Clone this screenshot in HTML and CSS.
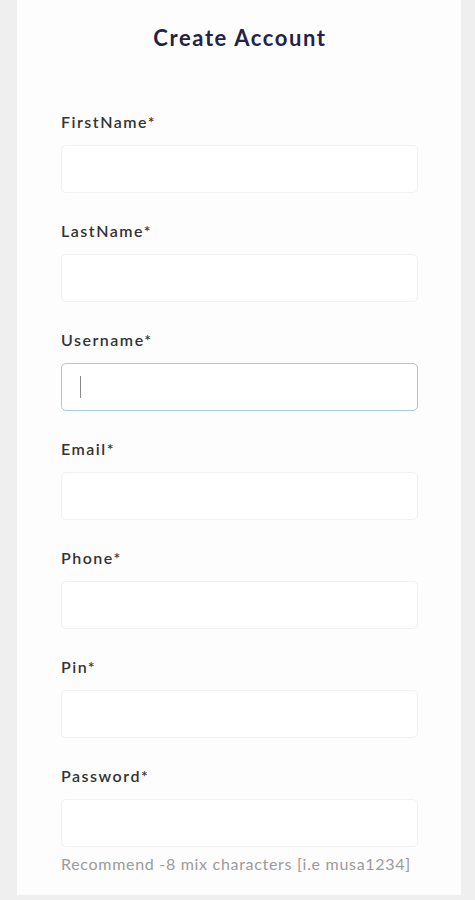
FILE: index.html
```html
<!DOCTYPE html>
<html>
<head>
<meta charset="utf-8">
<link rel="stylesheet" href="styles.css">
</head>
<body>
<div class="panel">
  <h1 class="title">Create Account</h1>
  <form class="form">
    <div class="field">
      <label class="label">FirstName*</label>
      <div class="input"></div>
    </div>
    <div class="field">
      <label class="label">LastName*</label>
      <div class="input"></div>
    </div>
    <div class="field">
      <label class="label">Username*</label>
      <div class="input focused"><span class="caret"></span></div>
    </div>
    <div class="field">
      <label class="label">Email*</label>
      <div class="input"></div>
    </div>
    <div class="field">
      <label class="label">Phone*</label>
      <div class="input"></div>
    </div>
    <div class="field">
      <label class="label">Pin*</label>
      <div class="input"></div>
    </div>
    <div class="field">
      <label class="label">Password*</label>
      <div class="input"></div>
      <p class="hint">Recommend -8 mix characters [i.e musa1234]</p>
    </div>
  </form>
</div>
</body>
</html>
```

FILE: styles.css
```css
html, body {
  margin: 0;
  padding: 0;
  background: #efefef;
  font-family: Lato, "Open Sans", sans-serif;
}
.panel {
  margin: 0 14px 0 17px;
  width: 444px;
  height: 895px;
  background: #fdfdfd;
  box-sizing: border-box;
  padding: 22px 42px 0 44px;
}
.title {
  margin: 0;
  text-align: center;
  font-size: 22px;
  font-weight: 700;
  letter-spacing: 1.6px;
  color: #23234a;
  line-height: 32px;
}
.form {
  margin-top: 58px;
  display: flex;
  flex-direction: column;
  gap: 28px;
}
.field {
  display: flex;
  flex-direction: column;
}
.label {
  font-size: 16px;
  letter-spacing: 1.5px;
  color: #333;
  font-weight: 600;
  line-height: 20px;
  margin-bottom: 13px;
}
.input {
  height: 48px;
  width: 357px;
  box-sizing: border-box;
  border: 1px solid #f1f1f1;
  border-radius: 5px;
  background: #fff;
  display: flex;
  align-items: center;
  padding-left: 18px;
}
.input.focused {
  border-color: #a9c7dd;
}
.caret {
  width: 1px;
  height: 22px;
  background: #8a8a8a;
}
.hint {
  margin: 7px 0 0;
  font-size: 16px;
  letter-spacing: 0.7px;
  color: #9b9b9b;
  line-height: 20px;
}
```
